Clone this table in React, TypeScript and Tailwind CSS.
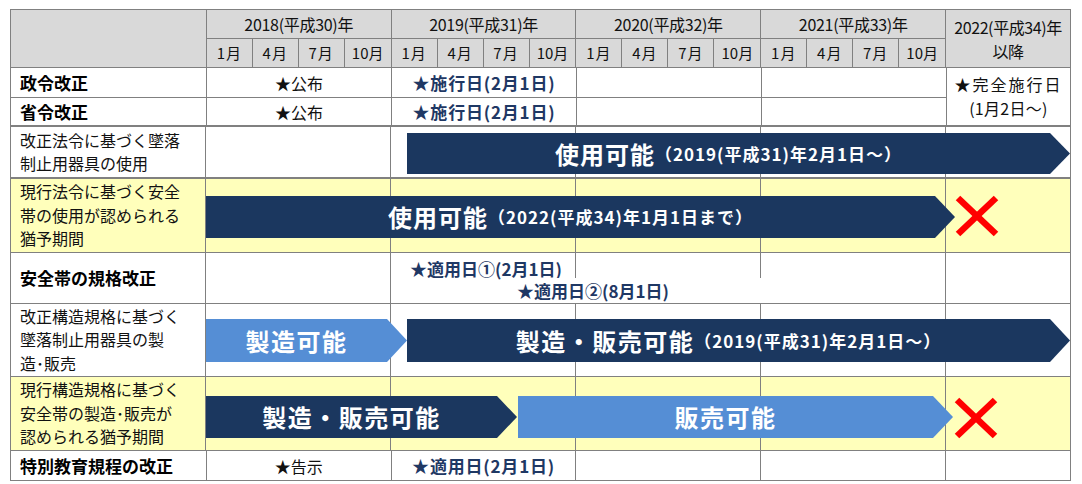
import React from "react";

function XMark() {
  return (
    <svg width="44" height="42" viewBox="0 0 44 42">
      <line x1="3" y1="3" x2="41" y2="39" stroke="#ff0000" strokeWidth="6.5" />
      <line x1="41" y1="3" x2="3" y2="39" stroke="#ff0000" strokeWidth="6.5" />
    </svg>
  );
}

function Cells() {
  return (
    <>
      <div className="w-[185px] h-full border-r border-[#808080]" />
      <div className="w-[185px] h-full border-r border-[#808080]" />
      <div className="w-[185px] h-full border-r border-[#808080]" />
      <div className="w-[185px] h-full border-r border-[#808080]" />
      <div className="w-[125px] h-full border-r border-[#808080]" />
    </>
  );
}

function Lines({ lines }: { lines: string[] }) {
  return (
    <div className="flex flex-col">
      {lines.map((l) => (
        <span key={l} className="block h-[23.5px] leading-[23.5px] whitespace-nowrap">
          {l}
        </span>
      ))}
    </div>
  );
}

export default function App() {
  const years = ["2018(平成30)年", "2019(平成31)年", "2020(平成32)年", "2021(平成33)年"];
  const months = ["1月", "4月", "7月", "10月"];
  return (
    <div className="w-[1082px] h-[484px] bg-white pt-[9px] pl-[10px] overflow-hidden font-['Noto_Sans_CJK_JP','Noto_Sans',sans-serif] text-[#111]">
      <div className="w-[1061px] border-t border-l border-[#808080]">
        {/* Header */}
        <div className="flex h-[58px] bg-[#d9d9d9] border-b border-[#808080]">
          <div className="w-[196px] h-full border-r border-[#808080]" />
          {years.map((y) => (
            <div key={y} className="w-[185px] h-full flex flex-col border-r border-[#808080]">
              <div className="h-[29px] border-b border-[#808080] flex items-center justify-center text-[16px] leading-[20px] tracking-[-0.3px]">
                {y}
              </div>
              <div className="flex-1 grid grid-cols-4">
                {months.map((m, i) => (
                  <div
                    key={m}
                    className={
                      i < 3
                        ? "border-r border-[#808080] flex items-center justify-center text-[15px] leading-[18px] tracking-[1px]"
                        : "flex items-center justify-center text-[15px] leading-[18px]"
                    }
                  >
                    {m}
                  </div>
                ))}
              </div>
            </div>
          ))}
          <div className="w-[125px] h-full border-r border-[#808080] flex flex-col items-center justify-center text-[16px] leading-[24px] tracking-[-0.4px]">
            <span>2022(平成34)年</span>
            <span>以降</span>
          </div>
        </div>

        {/* 政令 / 省令 */}
        <div className="flex">
          <div className="flex flex-col w-[936px]">
            <div className="flex h-[30px] border-b border-[#808080]">
              <div className="w-[196px] h-full border-r border-[#808080] flex items-center pl-[9px] text-[17px] leading-[20px] font-bold text-black">
                政令改正
              </div>
              <div className="w-[185px] h-full border-r border-[#808080] flex items-center justify-center text-[16px] leading-[20px]">
                ★公布
              </div>
              <div className="w-[185px] h-full border-r border-[#808080] flex items-center justify-center text-[17px] leading-[20px] font-bold text-[#1f3864] tracking-[0.8px]">
                ★施行日(2月1日)
              </div>
              <div className="w-[185px] h-full border-r border-[#808080]" />
              <div className="w-[185px] h-full border-r border-[#808080]" />
            </div>
            <div className="flex h-[29px] border-b-2 border-[#808080]">
              <div className="w-[196px] h-full border-r border-[#808080] flex items-center pl-[9px] text-[17px] leading-[20px] font-bold text-black">
                省令改正
              </div>
              <div className="w-[185px] h-full border-r border-[#808080] flex items-center justify-center text-[16px] leading-[20px]">
                ★公布
              </div>
              <div className="w-[185px] h-full border-r border-[#808080] flex items-center justify-center text-[17px] leading-[20px] font-bold text-[#1f3864] tracking-[0.8px]">
                ★施行日(2月1日)
              </div>
              <div className="w-[185px] h-full border-r border-[#808080]" />
              <div className="w-[185px] h-full border-r border-[#808080]" />
            </div>
          </div>
          <div className="w-[125px] h-[59px] border-r border-b-2 border-[#808080] flex flex-col items-center justify-center text-[16px]">
            <span className="block h-[23.5px] leading-[23.5px] tracking-[2px]">★完全施行日</span>
            <span className="block h-[23.5px] leading-[23.5px] tracking-[0.3px]">(1月2日～)</span>
          </div>
        </div>

        {/* 改正法令 */}
        <div className="flex h-[52px] border-b-2 border-[#808080]">
          <div className="w-[196px] h-full border-r border-[#808080] flex items-center pl-[9px] text-[16px]">
            <Lines lines={["改正法令に基づく墜落", "制止用器具の使用"]} />
          </div>
          <div className="relative flex h-full">
            <Cells />
            <div className="absolute left-[201px] top-[6px] w-[663px] h-[41px] bg-[#1b375f] text-white font-bold flex items-center justify-center pr-[20px] [clip-path:polygon(0_0,calc(100%_-_20px)_0,100%_50%,calc(100%_-_20px)_100%,0_100%)]">
              <span className="text-[24px] leading-[28px] tracking-[1px]">使用可能</span>
              <span className="text-[17px] leading-[22px] tracking-[1px]">（2019(平成31)年2月1日～）</span>
            </div>
          </div>
        </div>

        {/* 現行法令 */}
        <div className="flex h-[74px] bg-[#ffffbb] border-b border-[#808080]">
          <div className="w-[196px] h-full border-r border-[#808080] flex items-center pl-[9px] text-[16px]">
            <Lines lines={["現行法令に基づく安全", "帯の使用が認められる", "猶予期間"]} />
          </div>
          <div className="relative flex h-full">
            <Cells />
            <div className="absolute left-0 top-[17px] w-[749px] h-[42px] bg-[#1b375f] text-white font-bold flex items-center justify-center pr-[20px] [clip-path:polygon(0_0,calc(100%_-_20px)_0,100%_50%,calc(100%_-_20px)_100%,0_100%)]">
              <span className="text-[24px] leading-[28px] tracking-[1px]">使用可能</span>
              <span className="text-[17px] leading-[22px] tracking-[1px]">（2022(平成34)年1月1日まで）</span>
            </div>
            <div className="absolute left-[749px] top-[16px]">
              <XMark />
            </div>
          </div>
        </div>

        {/* 安全帯の規格改正 */}
        <div className="flex h-[51px] border-b border-[#808080]">
          <div className="w-[196px] h-full border-r border-[#808080] flex items-center pl-[9px] text-[17px] leading-[20px] font-bold text-black">
            安全帯の規格改正
          </div>
          <div className="relative flex h-full">
            <Cells />
            <div className="absolute left-[204px] top-[5px] text-[17px] leading-[22px] font-bold text-[#1f3864] whitespace-nowrap">
              ★適用日①(2月1日)
            </div>
            <div className="absolute left-[304px] top-[25px] w-[262px] h-[25px] bg-white flex items-center pl-[7px] text-[17px] leading-[22px] font-bold text-[#1f3864] whitespace-nowrap">
              ★適用日②(8月1日)
            </div>
          </div>
        </div>

        {/* 改正構造規格 */}
        <div className="flex h-[73px] border-b border-[#808080]">
          <div className="w-[196px] h-full border-r border-[#808080] flex items-center pl-[9px] text-[16px]">
            <Lines lines={["改正構造規格に基づく", "墜落制止用器具の製", "造･販売"]} />
          </div>
          <div className="relative flex h-full">
            <Cells />
            <div className="absolute left-0 top-[15px] w-[201px] h-[43px] bg-[#558ed5] text-white font-bold flex items-center justify-center pr-[20px] [clip-path:polygon(0_0,calc(100%_-_20px)_0,100%_50%,calc(100%_-_20px)_100%,0_100%)]">
              <span className="text-[24px] leading-[28px] tracking-[1.5px]">製造可能</span>
            </div>
            <div className="absolute left-[201px] top-[15px] w-[663px] h-[43px] bg-[#1b375f] text-white font-bold flex items-center justify-center pr-[20px] [clip-path:polygon(0_0,calc(100%_-_20px)_0,100%_50%,calc(100%_-_20px)_100%,0_100%)]">
              <span className="text-[24px] leading-[28px] tracking-[1.5px]">製造・販売可能</span>
              <span className="text-[17px] leading-[22px] tracking-[1px]">（2019(平成31)年2月1日～）</span>
            </div>
          </div>
        </div>

        {/* 現行構造規格 */}
        <div className="flex h-[74px] bg-[#ffffbb] border-b border-[#808080]">
          <div className="w-[196px] h-full border-r border-[#808080] flex items-center pl-[9px] text-[16px]">
            <Lines lines={["現行構造規格に基づく", "安全帯の製造･販売が", "認められる猶予期間"]} />
          </div>
          <div className="relative flex h-full">
            <Cells />
            <div className="absolute left-0 top-[19px] w-[311px] h-[42px] bg-[#1b375f] text-white font-bold flex items-center justify-center pr-[20px] [clip-path:polygon(0_0,calc(100%_-_20px)_0,100%_50%,calc(100%_-_20px)_100%,0_100%)]">
              <span className="text-[24px] leading-[28px] tracking-[1.5px]">製造・販売可能</span>
            </div>
            <div className="absolute left-[312px] top-[19px] w-[435px] h-[42px] bg-[#558ed5] text-white font-bold flex items-center justify-center pr-[20px] [clip-path:polygon(0_0,calc(100%_-_20px)_0,100%_50%,calc(100%_-_20px)_100%,0_100%)]">
              <span className="text-[24px] leading-[28px] tracking-[1.5px]">販売可能</span>
            </div>
            <div className="absolute left-[748px] top-[20px]">
              <XMark />
            </div>
          </div>
        </div>

        {/* 特別教育 */}
        <div className="flex h-[30px] border-b border-[#808080]">
          <div className="w-[196px] h-full border-r border-[#808080] flex items-center pl-[9px] text-[17px] leading-[20px] font-bold text-black">
            特別教育規程の改正
          </div>
          <div className="w-[185px] h-full border-r border-[#808080] flex items-center justify-center text-[16px] leading-[20px]">
            ★告示
          </div>
          <div className="w-[185px] h-full border-r border-[#808080] flex items-center justify-center text-[17px] leading-[20px] font-bold text-[#1f3864] tracking-[0.8px]">
            ★適用日(2月1日)
          </div>
          <div className="w-[185px] h-full border-r border-[#808080]" />
          <div className="w-[185px] h-full border-r border-[#808080]" />
          <div className="w-[125px] h-full border-r border-[#808080]" />
        </div>
      </div>
    </div>
  );
}
